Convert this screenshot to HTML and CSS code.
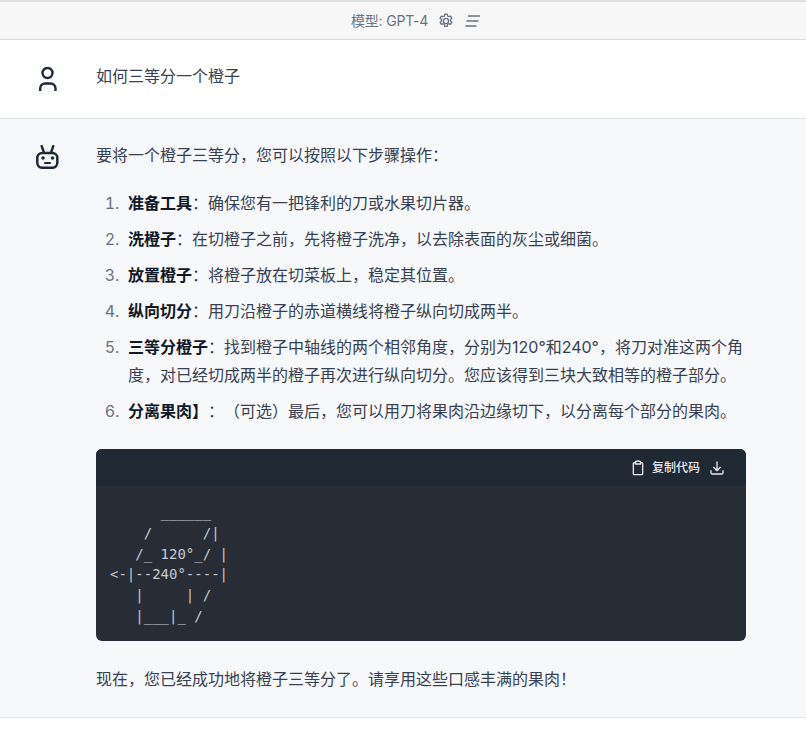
FILE: index.html
```html
<!DOCTYPE html>
<html lang="zh">
<head>
<meta charset="utf-8">
<title>模型: GPT-4</title>
<link rel="stylesheet" href="styles.css">
</head>
<body>
<header class="topbar">
  <span class="model">模型: GPT-4</span>
  <svg class="top-icon gear" viewBox="1.500 1 21 22" fill="none" stroke="currentColor" stroke-width="1.800" stroke-linejoin="round"><path d="M10.300 2.500h3.400l.5 2.600 1.700 1 2.500-.9 1.700 3-2 1.700v2l2 1.700-1.700 3-2.500-.9-1.700 1-.5 2.600h-3.400l-.5-2.600-1.700-1-2.500.9-1.700-3 2-1.700v-2l-2-1.700 1.700-3 2.500.9 1.700-1z"/><circle cx="12" cy="12" r="3.500"/></svg>
  <svg class="top-icon list" viewBox="0 0 16 16" fill="none" stroke="currentColor" stroke-width="1.300" stroke-linecap="round"><path d="M3.500 3h11M2 8h11M1 13h10"/></svg>
</header>
<section class="row user">
  <svg class="avatar" viewBox="0 0 24 24" fill="none" stroke="#1f2937" stroke-width="2.400" stroke-linecap="round"><circle cx="11.500" cy="6" r="5"/><path d="M4.200 23.500v-2a5 5 0 0 1 5-5h5.300a5 5 0 0 1 5 5v2"/></svg>
  <p class="text">如何三等分一个橙子</p>
</section>
<section class="row bot">
  <svg class="avatar" viewBox="0 0 24 24" fill="none" stroke="#1f2937" stroke-width="2.500" stroke-linecap="round" stroke-linejoin="round"><path d="M5.700 1.200l2.300 6.500M17.300 1.200L15 7.700"/><rect x="1.300" y="8" width="20" height="14.800" rx="5"/><path d="M9 18h5" stroke-width="2"/><circle cx="7" cy="13" r="1.800" fill="#1f2937" stroke="none"/><circle cx="16.500" cy="13" r="1.800" fill="#1f2937" stroke="none"/></svg>
  <div class="content">
    <p class="text">要将一个橙子三等分，您可以按照以下步骤操作：</p>
    <ol class="steps">
      <li><strong>准备工具</strong>：确保您有一把锋利的刀或水果切片器。</li>
      <li><strong>洗橙子</strong>：在切橙子之前，先将橙子洗净，以去除表面的灰尘或细菌。</li>
      <li><strong>放置橙子</strong>：将橙子放在切菜板上，稳定其位置。</li>
      <li><strong>纵向切分</strong>：用刀沿橙子的赤道横线将橙子纵向切成两半。</li>
      <li><strong>三等分橙子</strong>：找到橙子中轴线的两个相邻角度，分别为120°和240°，将刀对准这两个角度，对已经切成两半的橙子再次进行纵向切分。您应该得到三块大致相等的橙子部分。</li>
      <li><strong>分离果肉】</strong>：（可选）最后，您可以用刀将果肉沿边缘切下，以分离每个部分的果肉。</li>
    </ol>
    <div class="code">
      <div class="code-head">
        <svg class="code-icon" viewBox="0 0 24 24" fill="none" stroke="currentColor" stroke-width="2" stroke-linejoin="round"><path d="M8 4H6.500A1.500 1.500 0 0 0 5 5.500v15A1.500 1.500 0 0 0 6.500 22h11a1.500 1.500 0 0 0 1.500-1.500v-15A1.500 1.500 0 0 0 17.500 4H16"/><path d="M8 6V4a4 2.500 0 0 1 8 0v2z"/></svg>
        <span class="copy">复制代码</span>
        <svg class="code-icon dl" viewBox="0 0 24 24" fill="none" stroke="currentColor" stroke-width="2" stroke-linecap="round" stroke-linejoin="round"><path d="M12 3v13M7 11l5 5 5-5M3 16v3a2 2 0 0 0 2 2h14a2 2 0 0 0 2-2v-3"/></svg>
      </div>
<pre class="code-body">      ______
    /      /|
   /_ 120°_/ |
&lt;-|--240°----|
   |     | /
   |___|_ /</pre>
    </div>
    <p class="text closing">现在，您已经成功地将橙子三等分了。请享用这些口感丰满的果肉！</p>
  </div>
</section>
</body>
</html>
```
FILE: styles.css
```css
* { box-sizing: border-box; }
html, body { margin: 0; padding: 0; }
body {
  background: #fff;
  color: #374151;
  font-family: Inter, "Noto Sans CJK SC", sans-serif;
  font-size: 16px;
  line-height: 28px;
  text-spacing-trim: space-all;
}
.topbar {
  height: 40px;
  display: flex;
  align-items: center;
  justify-content: center;
  background: #f7f7f8;
  border-top: 2px solid #e0e0e0;
  border-bottom: 1px solid #dcdcdf;
  color: #6b7280;
  font-size: 14px;
  padding-left: 26px;
}
.model { letter-spacing: -0.2px; }
.top-icon { width: 16px; height: 16px; }
.gear { margin-left: 10px; }
.list { margin-left: 11px; }
.row {
  display: flex;
  padding: 0 60px 0 36px;
  gap: 36px;
  border-bottom: 1px solid #e3e5e8;
}
.user { height: 79px; padding-top: 22px; background: #fff; }
.user .avatar { margin-top: 5px; }
.bot { height: 599px; padding-top: 22px; background: #f7f8fa; }
.avatar { width: 24px; height: 24px; flex: none; margin-top: 4px; }
.content { width: 650px; }
.text { margin: 0; }
.steps { margin: 20px 0 0; padding: 0 0 0 32px; }
.steps li { margin: 0 0 8px; }
.steps li::marker { color: #6b7280; content: counter(list-item) ".\00a0\00a0"; }
.steps strong { color: #111827; font-weight: 700; }
.code {
  margin-top: 24px;
  border-radius: 6px;
  overflow: hidden;
  background: #282c34;
}
.code-head {
  height: 37px;
  background: #202833;
  display: flex;
  align-items: center;
  justify-content: flex-end;
  gap: 6px;
  padding-right: 21px;
  color: #e5e7eb;
}
.code-icon { width: 16px; height: 16px; }
.dl { margin-left: 3px; }
.copy { font-size: 12px; font-weight: 500; }
.code-body {
  margin: 0;
  padding: 16px 14px 14px;
  height: 155px;
  font-family: "DejaVu Sans Mono", monospace;
  font-size: 14px;
  line-height: 20.800px;
  color: #c5c9d0;
}
.closing { margin-top: 24px; }
```
